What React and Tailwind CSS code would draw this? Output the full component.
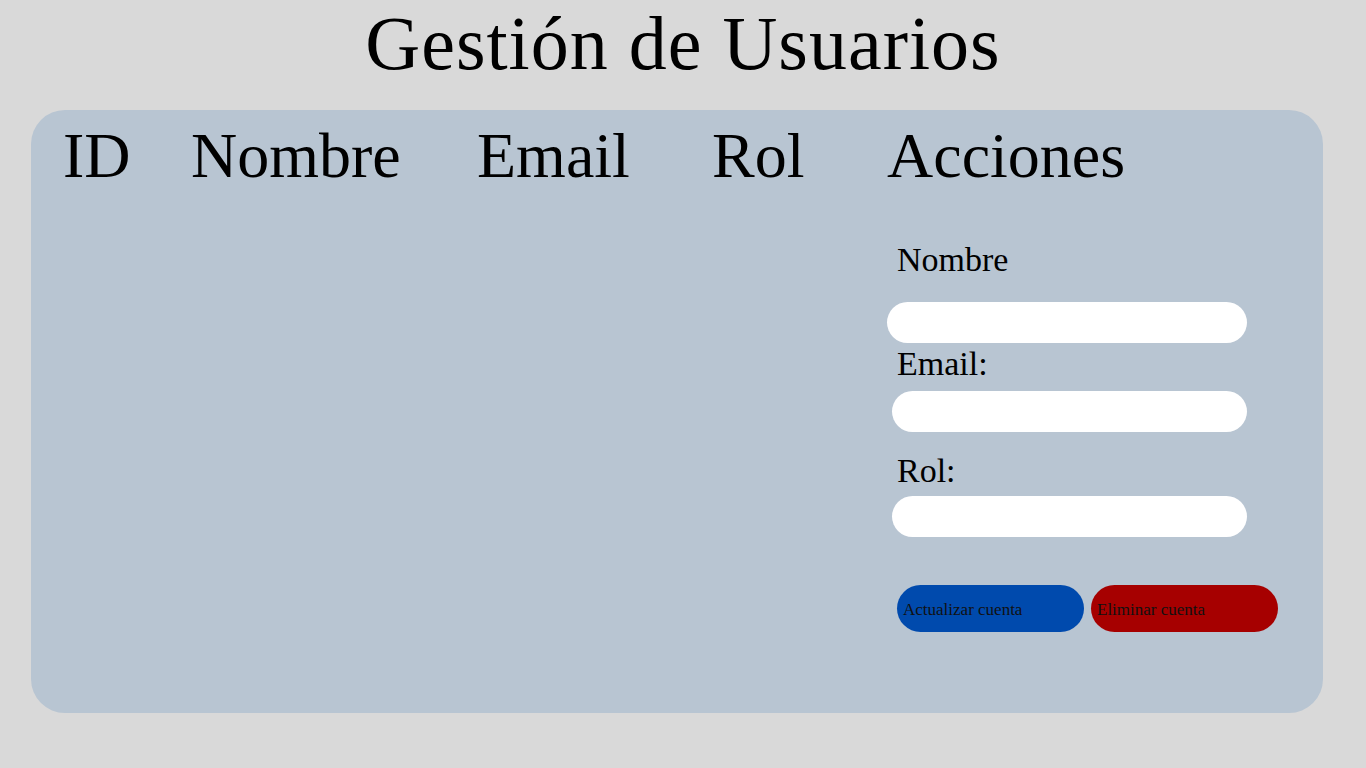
import React from "react";

export default function App() {
  const serif = { fontFamily: '"Liberation Serif", "Times New Roman", serif' };
  return (
    <div className="min-h-[768px] w-full bg-[#d9d9d9] text-black" style={serif}>
      <h1 className="pt-[2px] text-center text-[76px] leading-[82px] font-normal tracking-[1px]">Gestión de Usuarios</h1>
      <div className="ml-[31px] mt-[26px] h-[603px] w-[1292px] rounded-[34px] bg-[#b8c5d2]">
        <div className="flex pl-[32px] pt-[14px] text-[64px] leading-none">
          <div className="w-[128px]">ID</div>
          <div className="w-[286px]">Nombre</div>
          <div className="w-[235px]">Email</div>
          <div className="w-[175px]">Rol</div>
          <div>Acciones</div>
        </div>
        <div className="flex flex-col pl-[856px] text-[34px] leading-none">
          <label className="mt-[55px] ml-[10px] block">Nombre</label>
          <input className="mt-[25px] h-[41px] w-[360px] rounded-full bg-white outline-none" />
          <label className="mt-[4px] ml-[10px] block">Email:</label>
          <input className="mt-[10px] ml-[5px] h-[41px] w-[355px] rounded-full bg-white outline-none" />
          <label className="mt-[22px] ml-[10px] block">Rol:</label>
          <input className="mt-[8px] ml-[5px] h-[41px] w-[355px] rounded-full bg-white outline-none" />
          <div className="mt-[48px] ml-[10px] flex gap-[7px]">
            <button className="flex h-[47px] w-[187px] items-center rounded-full bg-[#004aad] px-[6px] pt-[2px] text-[17px] text-[#111]">Actualizar cuenta</button>
            <button className="flex h-[47px] w-[187px] items-center rounded-full bg-[#a60000] px-[6px] pt-[2px] text-[17px] text-[#111]">Eliminar cuenta</button>
          </div>
        </div>
      </div>
    </div>
  );
}
